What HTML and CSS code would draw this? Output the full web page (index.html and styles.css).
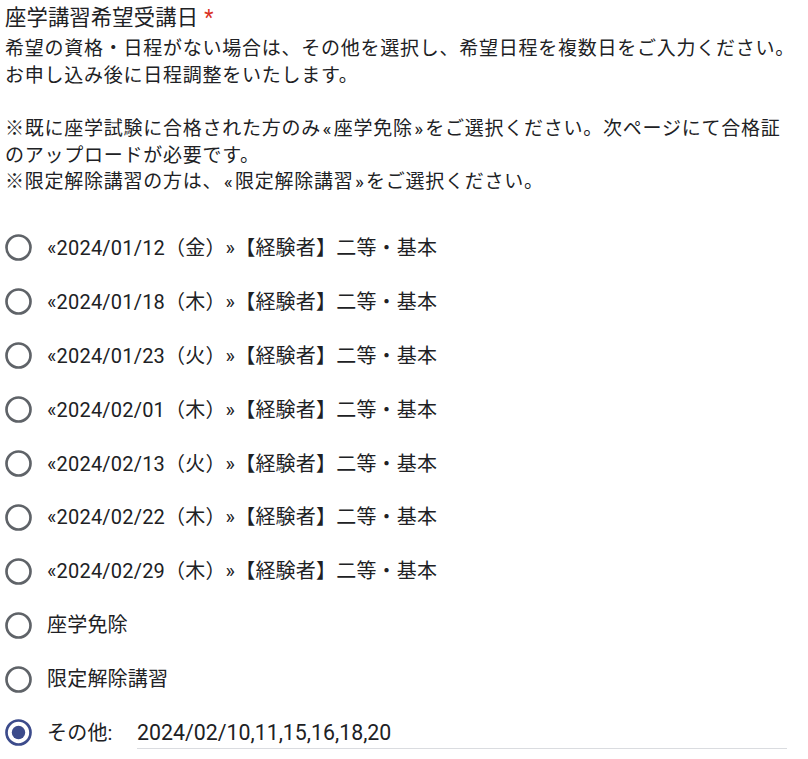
FILE: index.html
```html
<!DOCTYPE html>
<html lang="ja">
<head>
<meta charset="utf-8">
<link rel="stylesheet" href="styles.css">
</head>
<body>
<div class="question">
  <div class="title">座学講習希望受講日<span class="req">*</span></div>
  <div class="desc">希望の資格・日程がない場合は、その他を選択し、希望日程を複数日をご入力ください。<br>お申し込み後に日程調整をいたします。<br><br>※既に座学試験に合格された方のみ<span class="gq">«</span>座学免除<span class="gq">»</span>をご選択ください。次ページにて合格証のアップロードが必要です。<br>※限定解除講習の方は、<span class="gq">«</span>限定解除講習<span class="gq">»</span>をご選択ください。</div>
  <div class="options">
    <div class="opt"><svg class="radio" viewBox="0 0 27 27"><circle cx="13.5" cy="13.5" r="12" /></svg><span class="label">«2024/01/12（金）»【経験者】二等・基本</span></div>
    <div class="opt"><svg class="radio" viewBox="0 0 27 27"><circle cx="13.5" cy="13.5" r="12" /></svg><span class="label">«2024/01/18（木）»【経験者】二等・基本</span></div>
    <div class="opt"><svg class="radio" viewBox="0 0 27 27"><circle cx="13.5" cy="13.5" r="12" /></svg><span class="label">«2024/01/23（火）»【経験者】二等・基本</span></div>
    <div class="opt"><svg class="radio" viewBox="0 0 27 27"><circle cx="13.5" cy="13.5" r="12" /></svg><span class="label">«2024/02/01（木）»【経験者】二等・基本</span></div>
    <div class="opt"><svg class="radio" viewBox="0 0 27 27"><circle cx="13.5" cy="13.5" r="12" /></svg><span class="label">«2024/02/13（火）»【経験者】二等・基本</span></div>
    <div class="opt"><svg class="radio" viewBox="0 0 27 27"><circle cx="13.5" cy="13.5" r="12" /></svg><span class="label">«2024/02/22（木）»【経験者】二等・基本</span></div>
    <div class="opt"><svg class="radio" viewBox="0 0 27 27"><circle cx="13.5" cy="13.5" r="12" /></svg><span class="label">«2024/02/29（木）»【経験者】二等・基本</span></div>
    <div class="opt"><svg class="radio" viewBox="0 0 27 27"><circle cx="13.5" cy="13.5" r="12" /></svg><span class="label">座学免除</span></div>
    <div class="opt"><svg class="radio" viewBox="0 0 27 27"><circle cx="13.5" cy="13.5" r="12" /></svg><span class="label">限定解除講習</span></div>
    <div class="opt"><svg class="radio checked" viewBox="0 0 27 27"><circle cx="13.5" cy="13.5" r="12" /><circle class="dot" cx="13.5" cy="13.5" r="6.7" /></svg><span class="label other">その他:</span><div class="input">2024/02/10,11,15,16,18,20</div></div>
  </div>
</div>
</body>
</html>
```
FILE: styles.css
```css
html, body { margin: 0; padding: 0; background: #fff; }
body {
  font-family: Roboto, "Noto Sans CJK JP", sans-serif;
  color: #202124;
}
.question { padding: 5px 0 0 5px; width: 792px; }
.title {
  font-size: 21.33px;
  line-height: 26px;
  letter-spacing: 0.13px;
}
.req { color: #d93025; margin-left: 6px; }
.desc {
  margin-top: 5px;
  font-size: 19px;
  line-height: 26.67px;
  letter-spacing: 0.75px;
}
.gq { margin: 0 1.5px; }
.options { margin-top: 25px; display: flex; flex-direction: column; }
.opt { height: 53.9px; display: flex; align-items: center; }
.radio { width: 27px; height: 27px; flex: none; }
.radio circle { fill: none; stroke: #5f6368; stroke-width: 2.67; }
.radio.checked circle { stroke: #3c4b8b; }
.radio.checked .dot { fill: #3c4b8b; stroke: none; }
.label {
  margin-left: 15px;
  font-size: 20px;
  letter-spacing: 0.2px;
  line-height: 26px;
}
.other { width: 90px; flex: none; }
.input {
  flex: 1;
  font-size: 21.33px;
  line-height: 30px;
  padding-top: 1px;
  border-bottom: 1px solid #dadce0;
  margin-right: 10px;
}
```
